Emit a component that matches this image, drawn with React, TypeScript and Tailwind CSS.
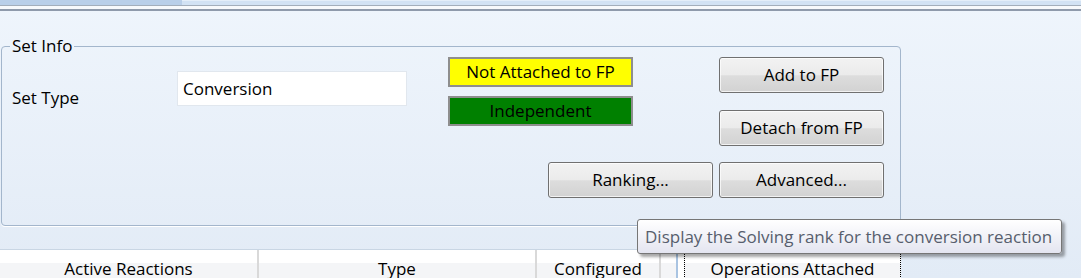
import React from 'react';

type BtnProps = {
  label: string;
};

// Aero-style push button
const WinButton = ({ label }: BtnProps) => (
  <button className="h-[36px] w-[165px] rounded-[3px] border border-[#707070] bg-[linear-gradient(to_bottom,#f2f2f2_0%,#ebebeb_50%,#dddddd_52%,#d2d2d2_100%)] text-[17px] leading-[22px] text-black shadow-[inset_0_0_0_1px_rgba(255,255,255,0.7)]">
    {label}
  </button>
);

const HeaderCell = ({ label, className }: { label: string; className: string }) => (
  <div
    className={`flex h-full justify-center pt-[8px] bg-[linear-gradient(to_bottom,#ffffff_0%,#ffffff_45%,#f4f5f7_46%,#f4f5f7_100%)] ${className}`}
  >
    {label}
  </div>
);

export default function App() {
  return (
    <div className="relative h-[278px] w-[1081px] overflow-hidden bg-[linear-gradient(to_bottom,#eff5fc,#e2ebf6)] font-['Open_Sans',sans-serif] text-[17px] leading-[22px] text-black">
      {/* window chrome strip */}
      <div className="flex h-[5px]">
        <div className="w-[182px] bg-[#b9cfe9]" />
        <div className="flex-1 border-t border-[#e4eef9] bg-[#d2e2f4]" />
      </div>
      <div className="h-[1px] bg-[#a3aebb]" />
      <div className="h-[3px] bg-[#f7f9fc]" />
      <div className="h-[2px] bg-[#8f9aab]" />

      {/* Set Info group */}
      <fieldset className="ml-[1px] mt-[24px] w-[900px] rounded-[4px] border border-[#a3b6cc] shadow-[0_1px_0_#ffffff]">
        <legend className="ml-[8px] px-[2px]">Set Info</legend>

        <div className="flex pl-[10px] pr-[16px]">
          <div className="mt-[30px] w-[165px]">Set Type</div>
          <div className="mt-[14px] flex h-[35px] w-[230px] items-center border border-[#e1e7ee] bg-white pl-[5px]">
            Conversion
          </div>

          <div className="ml-[41px] flex w-[185px] flex-col gap-[9px]">
            <div className="flex h-[30px] items-center justify-center border-2 border-[#8e8e8e] bg-[#ffff00]">
              Not Attached to FP
            </div>
            <div className="flex h-[30px] items-center justify-center border-2 border-[#8e8e8e] bg-[#008000]">
              Independent
            </div>
          </div>

          <div className="ml-auto flex flex-col gap-[17px]">
            <WinButton label="Add to FP" />
            <WinButton label="Detach from FP" />
          </div>
        </div>

        <div className="mt-[16px] flex justify-end gap-[6px] pb-[27px] pr-[16px]">
          <WinButton label="Ranking..." />
          <WinButton label="Advanced..." />
        </div>
      </fieldset>

      {/* grid header */}
      <div className="mt-[23px] flex h-[30px] w-[903px] border-t border-[#c9d6e4]">
        <HeaderCell label="Active Reactions" className="w-[259px] border-r-2 border-[#d9d9d9]" />
        <HeaderCell label="Type" className="w-[278px] border-r-2 border-[#d9d9d9]" />
        <HeaderCell label="Configured" className="w-[124px] border-r-2 border-[#d9d9d9]" />
        <HeaderCell label="" className="w-[15px]" />
        <div className="h-full w-[2px] bg-[#a9c4e2]" />
        <div className="h-full w-[6px] bg-white" />
        <HeaderCell
          label="Operations Attached"
          className="w-[217px] border-x border-dotted border-black"
        />
      </div>

      {/* tooltip */}
      <div className="absolute left-[637px] top-[219px] flex h-[35px] w-[425px] items-center rounded-[3px] border border-[#767676] bg-[linear-gradient(to_bottom,#ffffff,#e4e5f0)] pl-[7px] text-[#575e6d] shadow-[3px_3px_3px_rgba(0,0,0,0.35)]">
        Display the Solving rank for the conversion reaction
      </div>
    </div>
  );
}
